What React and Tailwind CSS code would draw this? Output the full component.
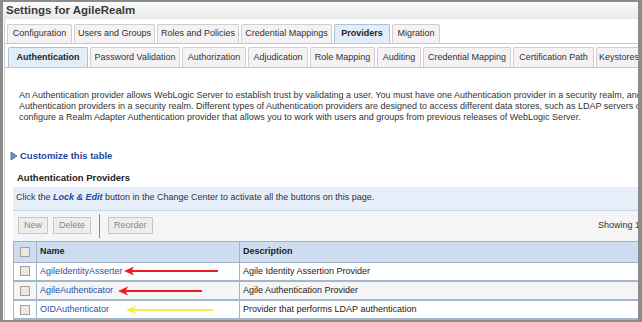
import React from "react";

const tabs1 = [
  ["Configuration", 65],
  ["Users and Groups", 81],
  ["Roles and Policies", 82],
  ["Credential Mappings", 91],
  ["Providers", 56],
  ["Migration", 48],
];
const tabs2 = [
  ["Authentication", 80],
  ["Password Validation", 90],
  ["Authorization", 64],
  ["Adjudication", 60],
  ["Role Mapping", 65],
  ["Auditing", 44],
  ["Credential Mapping", 88],
  ["Certification Path", 81],
  ["Keystores", 46],
];

const rows = [
  { name: "AgileIdentityAsserter", desc: "Agile Identity Assertion Provider", arrow: { from: 124, to: 218, color: "#ea1c24" } },
  { name: "AgileAuthenticator", desc: "Agile Authentication Provider", arrow: { from: 118, to: 202, color: "#ea1c24" } },
  { name: "OIDAuthenticator", desc: "Provider that performs LDAP authentication", arrow: { from: 126, to: 213, color: "#f4ef45" } },
];

function Tab({ label, width, active, h }) {
  return (
    <div
      style={{ width }}
      className={
        h +
        " shrink-0 flex items-center justify-center border border-b-0 rounded-t-[2px] whitespace-nowrap " +
        (active ? "bg-[#e3edf8] border-[#a9c3de] font-bold text-[#222]" : "bg-[#f4f2f4] border-[#cfcfcf] text-[#333]")
      }
    >
      {label}
    </div>
  );
}

function Check() {
  return <div className="w-[10px] h-[10px] border border-[#a0a0a0] bg-[#ece9e2] mx-auto" />;
}

function Arrow({ from, to, color }) {
  // points left, tip at "from" (page x)
  const w = to - from;
  return (
    <svg className="absolute top-1/2 -translate-y-1/2" style={{ left: from - 37 }} width={w} height="10" viewBox={`0 0 ${w} 10`}>
      <line x1="6" y1="5" x2={w} y2="5" stroke={color} strokeWidth="2" />
      <path d="M0 5 L10 0.5 L7.5 5 L10 9.5 Z" fill={color} />
    </svg>
  );
}

export default function App() {
  return (
    <div className="w-[642px] h-[322px] bg-[#8c8c8c] pl-[3px] pt-[2px] pr-[4px] pb-[2px] overflow-hidden" style={{ fontFamily: '"Liberation Sans", Arial, sans-serif' }}>
      <div className="w-full h-full bg-white overflow-hidden text-[9px] text-[#222]">
        {/* title bar */}
        <div className="h-[17px] bg-gradient-to-b from-[#fbfbfb] to-[#e9e9e9] flex items-center pl-[3px] text-[11.5px] font-bold text-[#3a3a3a]">
          Settings for AgileRealm
        </div>

        <div className="border-l border-[#d0d0d0] ml-[1px] h-full">
          {/* tab row 1 */}
          <div className="flex items-end gap-[2px] pl-[2px] pt-[5px] border-b border-[#b3cbe4] w-[700px]">
            {tabs1.map(([t, w]) => (
              <Tab key={t} label={t} width={w} h="h-[19px]" active={t === "Providers"} />
            ))}
          </div>
          {/* tab row 2 */}
          <div className="flex items-end gap-[2px] pl-[3px] pt-[3px] border-b border-[#b3cbe4] w-[700px]">
            {tabs2.map(([t, w]) => (
              <Tab key={t} label={t} width={w} h="h-[20px]" active={t === "Authentication"} />
            ))}
          </div>

          {/* description */}
          <div className="pt-[22px] pl-[14px] leading-[11px] whitespace-nowrap text-[#333]">
            <div>An Authentication provider allows WebLogic Server to establish trust by validating a user. You must have one Authentication provider in a security realm, and you can configure multiple</div>
            <div>Authentication providers in a security realm. Different types of Authentication providers are designed to access different data stores, such as LDAP servers or DBMS. You can also</div>
            <div>configure a Realm Adapter Authentication provider that allows you to work with users and groups from previous releases of WebLogic Server.</div>
          </div>

          {/* customize */}
          <div className="mt-[26px] pl-[5px] flex items-center gap-[2px]">
            <svg width="8" height="10" viewBox="0 0 8 10">
              <path d="M1 1 L7 5 L1 9 Z" fill="#6f8fc7" stroke="#3f5fa0" strokeWidth="0.8" />
            </svg>
            <span className="font-bold text-[#1d48a0] text-[9.5px]">Customize this table</span>
          </div>

          {/* section */}
          <div className="mt-[8px] pl-[12px] font-bold text-[9.5px] text-[#222]">Authentication Providers</div>

          <div className="mt-[1px] ml-[8px] w-[700px]">
            <div className="h-[24px] bg-[#e6eefa] border-b border-[#c9d5e5] flex items-center pl-[3px] text-[#333]">
              <span>
                Click the <i className="font-bold text-[#1d48a0]">Lock &amp; Edit</i> button in the Change Center to activate all the buttons on this page.
              </span>
            </div>
            <div className="h-[30px] bg-[#f5f5f5] flex items-center pl-[5px] pr-[38px] gap-[5px]">
              <div className="h-[17px] px-[5px] flex items-center border border-[#c6c6c6] bg-[#ededed] text-[#8a8a8a]">New</div>
              <div className="h-[17px] px-[5px] flex items-center border border-[#c6c6c6] bg-[#ededed] text-[#8a8a8a]">Delete</div>
              <div className="w-[1px] h-[24px] bg-[#8a8a8a] mx-[3px]" />
              <div className="h-[17px] px-[5px] flex items-center border border-[#c6c6c6] bg-[#ededed] text-[#8a8a8a]">Reorder</div>
              <div className="ml-auto text-[#333]">Showing 1 to 3 of 3</div>
            </div>

            <table className="table-fixed border-collapse w-[700px]">
              <colgroup>
                <col className="w-[23px]" />
                <col className="w-[203px]" />
                <col />
              </colgroup>
              <thead>
                <tr className="h-[21px] bg-[#cddcee]">
                  <th className="border border-[#9db2c9]"><Check /></th>
                  <th className="border border-[#9db2c9] text-left pl-[3px] font-bold">Name</th>
                  <th className="border border-[#9db2c9] text-left pl-[3px] font-bold">Description</th>
                </tr>
              </thead>
              <tbody>
                {rows.map((r, i) => (
                  <tr key={r.name} className={"h-[19px] " + (i === 1 ? "bg-[#f5f5f5]" : "bg-white")}>
                    <td className="border border-[#a4b6c9] border-b-2"><Check /></td>
                    <td className="border border-[#a4b6c9] border-b-2 pl-[3px] relative">
                      <span className="text-[#2452a8]">{r.name}</span>
                      <Arrow {...r.arrow} />
                    </td>
                    <td className="border border-[#a4b6c9] border-b-2 pl-[3px] text-[#222]">{r.desc}</td>
                  </tr>
                ))}
              </tbody>
            </table>
          </div>
        </div>
      </div>
    </div>
  );
}
